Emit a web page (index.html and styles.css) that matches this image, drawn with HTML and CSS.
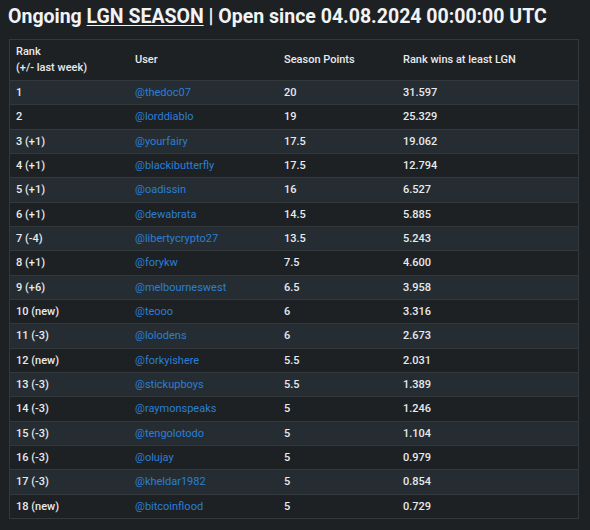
FILE: index.html
```html
<!DOCTYPE html>
<html>
<head>
<meta charset="utf-8">
<link rel="stylesheet" href="styles.css">
</head>
<body>
<h1 class="title">Ongoing <span class="u">LGN SEASON</span> | Open since 04.08.2024 00:00:00 UTC</h1>
<table class="board">
<thead>
<tr><th class="c1">Rank<br>(+/- last week)</th><th class="c2">User</th><th class="c3">Season Points</th><th class="c4">Rank wins at least LGN</th></tr>
</thead>
<tbody>
<tr><td>1</td><td><a>@thedoc07</a></td><td>20</td><td>31.597</td></tr>
<tr><td>2</td><td><a>@lorddiablo</a></td><td>19</td><td>25.329</td></tr>
<tr><td>3 (+1)</td><td><a>@yourfairy</a></td><td>17.5</td><td>19.062</td></tr>
<tr><td>4 (+1)</td><td><a>@blackibutterfly</a></td><td>17.5</td><td>12.794</td></tr>
<tr><td>5 (+1)</td><td><a>@oadissin</a></td><td>16</td><td>6.527</td></tr>
<tr><td>6 (+1)</td><td><a>@dewabrata</a></td><td>14.5</td><td>5.885</td></tr>
<tr><td>7 (-4)</td><td><a>@libertycrypto27</a></td><td>13.5</td><td>5.243</td></tr>
<tr><td>8 (+1)</td><td><a>@forykw</a></td><td>7.5</td><td>4.600</td></tr>
<tr><td>9 (+6)</td><td><a>@melbourneswest</a></td><td>6.5</td><td>3.958</td></tr>
<tr><td>10 (new)</td><td><a>@teooo</a></td><td>6</td><td>3.316</td></tr>
<tr><td>11 (-3)</td><td><a>@lolodens</a></td><td>6</td><td>2.673</td></tr>
<tr><td>12 (new)</td><td><a>@forkyishere</a></td><td>5.5</td><td>2.031</td></tr>
<tr><td>13 (-3)</td><td><a>@stickupboys</a></td><td>5.5</td><td>1.389</td></tr>
<tr><td>14 (-3)</td><td><a>@raymonspeaks</a></td><td>5</td><td>1.246</td></tr>
<tr><td>15 (-3)</td><td><a>@tengolotodo</a></td><td>5</td><td>1.104</td></tr>
<tr><td>16 (-3)</td><td><a>@olujay</a></td><td>5</td><td>0.979</td></tr>
<tr><td>17 (-3)</td><td><a>@kheldar1982</a></td><td>5</td><td>0.854</td></tr>
<tr><td>18 (new)</td><td><a>@bitcoinflood</a></td><td>5</td><td>0.729</td></tr>
</tbody>
</table>
</body>
</html>
```
FILE: styles.css
```css
html, body {
  margin: 0;
  background: #1e2124;
}
body {
  padding: 5px 8px 0 9px;
  font-family: Roboto, "Liberation Sans", sans-serif;
  color: #e8eaec;
}
.title {
  margin: 0 0 0 -1px;
  font-size: 19.5px;
  font-weight: 700;
  line-height: 24px;
  height: 34px;
  color: #f2f3f4;
}
.title .u {
  text-decoration: underline;
  text-underline-offset: 2px;
  text-decoration-thickness: 1px;
}
.board {
  width: 570px;
  border-collapse: collapse;
  border: 1px solid #33383c;
  font-size: 11px;
}
.board th, .board td {
  text-align: left;
  padding: 4px 6px;
  font-weight: 500;
  vertical-align: middle;
}
.board th {
  line-height: 16px;
  padding-top: 4px;
  padding-bottom: 4px;
  height: 32px;
}
.board td {
  line-height: 15.33px;
  border-top: 1px solid #33383c;
}
.c1 { width: 107px; }
.c2 { width: 137px; }
.c3 { width: 107px; }
.board tbody tr:nth-child(odd) td { background: #252d33; }
.board a {
  color: #2a7fd4;
  font-weight: 400;
}
```
